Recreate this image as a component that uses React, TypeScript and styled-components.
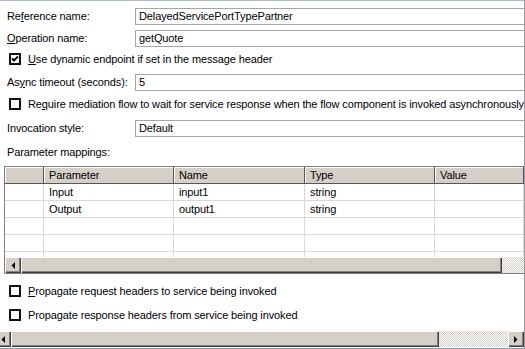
import React from "react";
import styled, { createGlobalStyle } from "styled-components";

const GlobalStyle = createGlobalStyle`
  html, body {
    margin: 0;
    padding: 0;
    background: #ffffff;
  }
  body {
    font-family: "Liberation Sans", Arial, sans-serif;
    font-size: 11px;
    letter-spacing: -0.12px;
    color: #000000;
  }
`;

const Panel = styled.div`
  width: 525px;
  height: 349px;
  box-sizing: border-box;
  border-top: 1px solid #a9b7cf;
  border-bottom: 1px solid #7f9db9;
  border-right: 1px solid #9c9c9c;
  background: #ffffff;
  overflow: hidden;
  display: flex;
  flex-direction: column;
`;

const FieldRow = styled.div<{ $top: number }>`
  margin-top: ${(p) => p.$top}px;
  display: grid;
  grid-template-columns: 128px 1fr;
  align-items: center;
  padding-left: 7px;
  height: 17px;
`;

const Label = styled.span`
  white-space: nowrap;
  line-height: 13px;
`;

const TextBox = styled.div`
  height: 17px;
  box-sizing: border-box;
  border: 1px solid #a5a5a5;
  border-right: none;
  padding-left: 3px;
  line-height: 15px;
  white-space: nowrap;
  overflow: hidden;
`;

const CheckRow = styled.label<{ $top: number }>`
  margin-top: ${(p) => p.$top}px;
  display: flex;
  align-items: center;
  gap: 7px;
  padding-left: 9px;
  height: 12px;
  white-space: nowrap;
  line-height: 13px;
`;

const Box = styled.span`
  flex: none;
  width: 12px;
  height: 12px;
  box-sizing: border-box;
  border: 2px solid #111111;
  background: #ffffff;
  display: flex;
  align-items: center;
  justify-content: center;
`;

const Key = styled.span`
  text-decoration: underline;
`;

const Caption = styled.div<{ $top: number }>`
  margin-top: ${(p) => p.$top}px;
  padding-left: 7px;
  line-height: 13px;
`;

const Table = styled.div`
  margin-top: 7px;
  margin-left: 4px;
  height: 108px;
  box-sizing: border-box;
  border: 1px solid #7f7f7f;
  border-right: none;
  display: flex;
  flex-direction: column;
  overflow: hidden;
`;

const GRID = "39px 130px 131px 130px 1fr";

const HeadRow = styled.div`
  display: grid;
  grid-template-columns: ${GRID};
  height: 17px;
  flex: none;
`;

const HeadCell = styled.div`
  background: #d4d0c8;
  box-shadow: inset 1px 1px 0 #ffffff;
  border-right: 1px solid #555555;
  border-bottom: 1px solid #555555;
  padding-left: 5px;
  line-height: 16px;
  white-space: nowrap;
`;

const Body = styled.div`
  flex: 1;
  overflow: hidden;
`;

const Row = styled.div`
  display: grid;
  grid-template-columns: ${GRID};
  height: 17px;
  box-sizing: border-box;
  border-bottom: 1px solid #d8d8d8;
`;

const Cell = styled.div`
  border-right: 1px solid #d8d8d8;
  padding-left: 5px;
  line-height: 16px;
  white-space: nowrap;
`;

const ScrollBar = styled.div<{ $shift?: number; $top?: number }>`
  flex: none;
  height: 16px;
  display: flex;
  margin-left: ${(p) => p.$shift ?? 0}px;
  margin-top: ${(p) => p.$top ?? 0}px;
`;

const Raised = styled.div`
  background: #d4d0c8;
  box-sizing: border-box;
  box-shadow: inset 1px 1px 0 #ffffff, inset -1px -1px 0 #404040, inset -2px -2px 0 #808080;
`;

const ArrowButton = styled(Raised)`
  width: 16px;
  height: 16px;
  flex: none;
  display: flex;
  align-items: center;
  justify-content: center;
`;

const Thumb = styled(Raised)<{ $width: number }>`
  width: ${(p) => p.$width}px;
  flex: none;
  height: 16px;
`;

const Track = styled.div`
  flex: 1;
  height: 16px;
  background: repeating-conic-gradient(#ffffff 0 25%, #d4d0c8 0 50%) 0 0 / 2px 2px;
`;

const Arrow = ({ dir }: { dir: "left" | "right" }) => (
  <svg width="4" height="7" viewBox="0 0 4 7">
    {dir === "left" ? (
      <polygon points="4,0 4,7 0.5,3.5" fill="#000" />
    ) : (
      <polygon points="0,0 0,7 3.5,3.5" fill="#000" />
    )}
  </svg>
);

const Check = ({ checked }: { checked?: boolean }) => (
  <Box>
    {checked && (
      <svg width="8" height="8" viewBox="0 0 8 8">
        <path d="M1 3.5 L3 5.5 L7 1.5" stroke="#000" strokeWidth="1.8" fill="none" />
      </svg>
    )}
  </Box>
);

const rows = [
  ["", "Input", "input1", "string", ""],
  ["", "Output", "output1", "string", ""],
  ["", "", "", "", ""],
  ["", "", "", "", ""],
  ["", "", "", "", ""],
];

const App: React.FC = () => (
  <>
    <GlobalStyle />
    <Panel>
      <FieldRow $top={7}>
        <Label>
          Re<Key>f</Key>erence name:
        </Label>
        <TextBox>DelayedServicePortTypePartner</TextBox>
      </FieldRow>
      <FieldRow $top={5}>
        <Label>
          <Key>O</Key>peration name:
        </Label>
        <TextBox>getQuote</TextBox>
      </FieldRow>
      <CheckRow $top={6}>
        <Check checked />
        <span>
          <Key>U</Key>se dynamic endpoint if set in the message header
        </span>
      </CheckRow>
      <FieldRow $top={9}>
        <Label>
          As<Key>y</Key>nc timeout (seconds):
        </Label>
        <TextBox>5</TextBox>
      </FieldRow>
      <CheckRow $top={7}>
        <Check />
        <span>
          Re<Key>q</Key>uire mediation flow to wait for service response when the flow component is invoked asynchronously
        </span>
      </CheckRow>
      <FieldRow $top={10}>
        <Label>Invocation style:</Label>
        <TextBox>Default</TextBox>
      </FieldRow>
      <Caption $top={9}>Parameter mappings:</Caption>
      <Table>
        <HeadRow>
          <HeadCell />
          <HeadCell>Parameter</HeadCell>
          <HeadCell>Name</HeadCell>
          <HeadCell>Type</HeadCell>
          <HeadCell>Value</HeadCell>
        </HeadRow>
        <Body>
          {rows.map((r, i) => (
            <Row key={i}>
              {r.map((c, j) => (
                <Cell key={j}>{c}</Cell>
              ))}
            </Row>
          ))}
        </Body>
        <ScrollBar>
          <ArrowButton>
            <Arrow dir="left" />
          </ArrowButton>
          <Thumb $width={481} />
          <Track />
        </ScrollBar>
      </Table>
      <CheckRow $top={11}>
        <Check />
        <span>
          <Key>P</Key>ropagate request headers to service being invoked
        </span>
      </CheckRow>
      <CheckRow $top={12}>
        <Check />
        <span>
          Propa<Key>g</Key>ate response headers from service being invoked
        </span>
      </CheckRow>
      <ScrollBar $shift={-5} $top={10}>
        <ArrowButton>
          <Arrow dir="left" />
        </ArrowButton>
        <Thumb $width={428} />
        <Track />
        <ArrowButton>
          <Arrow dir="right" />
        </ArrowButton>
      </ScrollBar>
    </Panel>
  </>
);

export default App;
